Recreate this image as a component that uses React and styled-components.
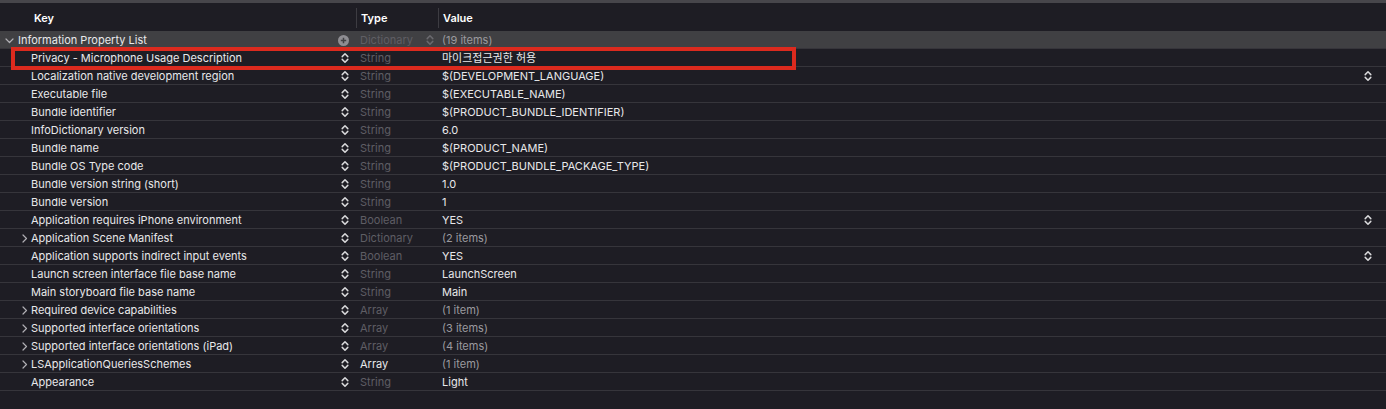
import React from 'react';
import styled, { createGlobalStyle } from 'styled-components';

const GlobalStyle = createGlobalStyle`
    html, body {
        margin: 0;
        padding: 0;
        background: #1e1d24;
    }
    body {
        font-family: Inter, "Noto Sans", "Noto Sans CJK KR", sans-serif;
        -webkit-font-smoothing: antialiased;
    }
`;

const rows = [
    { key: 'Privacy - Microphone Usage Description', type: 'String', value: '마이크접근권한 허용' },
    { key: 'Localization native development region', type: 'String', value: '$(DEVELOPMENT_LANGUAGE)', popup: true },
    { key: 'Executable file', type: 'String', value: '$(EXECUTABLE_NAME)' },
    { key: 'Bundle identifier', type: 'String', value: '$(PRODUCT_BUNDLE_IDENTIFIER)' },
    { key: 'InfoDictionary version', type: 'String', value: '6.0' },
    { key: 'Bundle name', type: 'String', value: '$(PRODUCT_NAME)' },
    { key: 'Bundle OS Type code', type: 'String', value: '$(PRODUCT_BUNDLE_PACKAGE_TYPE)' },
    { key: 'Bundle version string (short)', type: 'String', value: '1.0' },
    { key: 'Bundle version', type: 'String', value: '1' },
    { key: 'Application requires iPhone environment', type: 'Boolean', value: 'YES', popup: true },
    { key: 'Application Scene Manifest', type: 'Dictionary', value: '(2 items)', folder: true },
    { key: 'Application supports indirect input events', type: 'Boolean', value: 'YES', popup: true },
    { key: 'Launch screen interface file base name', type: 'String', value: 'LaunchScreen' },
    { key: 'Main storyboard file base name', type: 'String', value: 'Main' },
    { key: 'Required device capabilities', type: 'Array', value: '(1 item)', folder: true },
    { key: 'Supported interface orientations', type: 'Array', value: '(3 items)', folder: true },
    { key: 'Supported interface orientations (iPad)', type: 'Array', value: '(4 items)', folder: true },
    { key: 'LSApplicationQueriesSchemes', type: 'Array', value: '(1 item)', folder: true, typeBright: true },
    { key: 'Appearance', type: 'String', value: 'Light' },
];

/* Styled Components */
const Page = styled.div`
    width: 1386px;
    height: 409px;
    overflow: hidden;
    background: #1e1d24;
    border-top: 3px solid #47464b;
    box-sizing: border-box;
    position: relative;
`;

const Header = styled.div`
    display: grid;
    grid-template-columns: 356px 82px 1fr;
    height: 28px;
    padding-top: 2px;
    box-sizing: border-box;
    align-items: center;
`;

const HeaderCell = styled.div`
    height: 20px;
    display: flex;
    align-items: center;
    padding-left: ${p => p.$pad || 4}px;
    border-left: ${p => (p.$first ? 'none' : '1px solid #3d3c42')};
    font-size: 11px;
    font-weight: 600;
    color: #ffffff;
`;

const Row = styled.div`
    display: grid;
    grid-template-columns: 356px 82px 1fr;
    height: 18px;
    padding-top: 1px;
    box-sizing: border-box;
    border-bottom: 1px solid #36353b;
    background: ${p => (p.$root ? '#404043' : 'transparent')};
    font-size: 11px;
    line-height: 16px;
`;

const KeyCell = styled.div`
    display: flex;
    align-items: center;
    padding-left: ${p => p.$indent}px;
    padding-right: 7px;
    color: #e8e8ea;
    position: relative;
`;

const KeyText = styled.span`
    flex: 1;
    white-space: nowrap;
`;

const Disclosure = styled.span`
    position: absolute;
    left: ${p => p.$left}px;
    top: 0;
    height: 16px;
    display: flex;
    align-items: center;
`;

const TypeCell = styled.div`
    display: flex;
    align-items: center;
    padding-left: 4px;
    padding-right: 4px;
    color: ${p => (p.$bright ? '#e8e8ea' : '#5f5e64')};
`;

const TypeText = styled.span`
    flex: 1;
`;

const ValueCell = styled.div`
    display: flex;
    align-items: center;
    padding-left: 4px;
    padding-right: 14px;
    color: ${p => (p.$muted ? '#9b9a9f' : '#e8e8ea')};
`;

const ValueText = styled.span`
    flex: 1;
    white-space: nowrap;
    font-family: Inter, "Noto Sans CJK KR", sans-serif;
`;

const Highlight = styled.div`
    position: absolute;
    left: 11px;
    top: 44px;
    width: 785px;
    height: 23px;
    box-sizing: border-box;
    border: 4px solid #dc2a1e;
    pointer-events: none;
`;

const Stepper = ({ color = '#d8d8da' }) => (
    <svg width="8" height="12" viewBox="0 0 8 12" fill="none">
        <path d="M1.2 4.6 L4 1.8 L6.8 4.6" stroke={color} strokeWidth="1.5" strokeLinecap="round" strokeLinejoin="round" />
        <path d="M1.2 7.4 L4 10.2 L6.8 7.4" stroke={color} strokeWidth="1.5" strokeLinecap="round" strokeLinejoin="round" />
    </svg>
);

const Chevron = ({ open }) => (
    <svg width="9" height="9" viewBox="0 0 9 9" fill="none">
        {open ? (
            <path d="M1 3 L4.5 6.5 L8 3" stroke="#b0afb4" strokeWidth="1.2" strokeLinecap="round" strokeLinejoin="round" />
        ) : (
            <path d="M3 1 L6.5 4.5 L3 8" stroke="#b0afb4" strokeWidth="1.2" strokeLinecap="round" strokeLinejoin="round" />
        )}
    </svg>
);

const PlusCircle = () => (
    <svg width="11" height="11" viewBox="0 0 11 11">
        <circle cx="5.5" cy="5.5" r="5.5" fill="#8e8d92" />
        <path d="M5.5 2.8 V8.2 M2.8 5.5 H8.2" stroke="#404043" strokeWidth="1.5" />
    </svg>
);

const App = () => {
    return (
        <>
            <GlobalStyle />
            <Page>
                <Header>
                    <HeaderCell $first $pad={34}>Key</HeaderCell>
                    <HeaderCell>Type</HeaderCell>
                    <HeaderCell>Value</HeaderCell>
                </Header>
                <Row $root>
                    <KeyCell $indent={18}>
                        <Disclosure $left={5}><Chevron open /></Disclosure>
                        <KeyText>Information Property List</KeyText>
                        <PlusCircle />
                    </KeyCell>
                    <TypeCell>
                        <TypeText>Dictionary</TypeText>
                        <Stepper color="#6a696e" />
                    </TypeCell>
                    <ValueCell $muted>
                        <ValueText>(19 items)</ValueText>
                    </ValueCell>
                </Row>
                {rows.map(r => (
                    <Row key={r.key}>
                        <KeyCell $indent={31}>
                            {r.folder && <Disclosure $left={20}><Chevron /></Disclosure>}
                            <KeyText>{r.key}</KeyText>
                            <Stepper />
                        </KeyCell>
                        <TypeCell $bright={r.typeBright}>
                            <TypeText>{r.type}</TypeText>
                        </TypeCell>
                        <ValueCell $muted={r.folder}>
                            <ValueText>{r.value}</ValueText>
                            {r.popup && <Stepper />}
                        </ValueCell>
                    </Row>
                ))}
                <Highlight />
            </Page>
        </>
    );
};

export default App;
